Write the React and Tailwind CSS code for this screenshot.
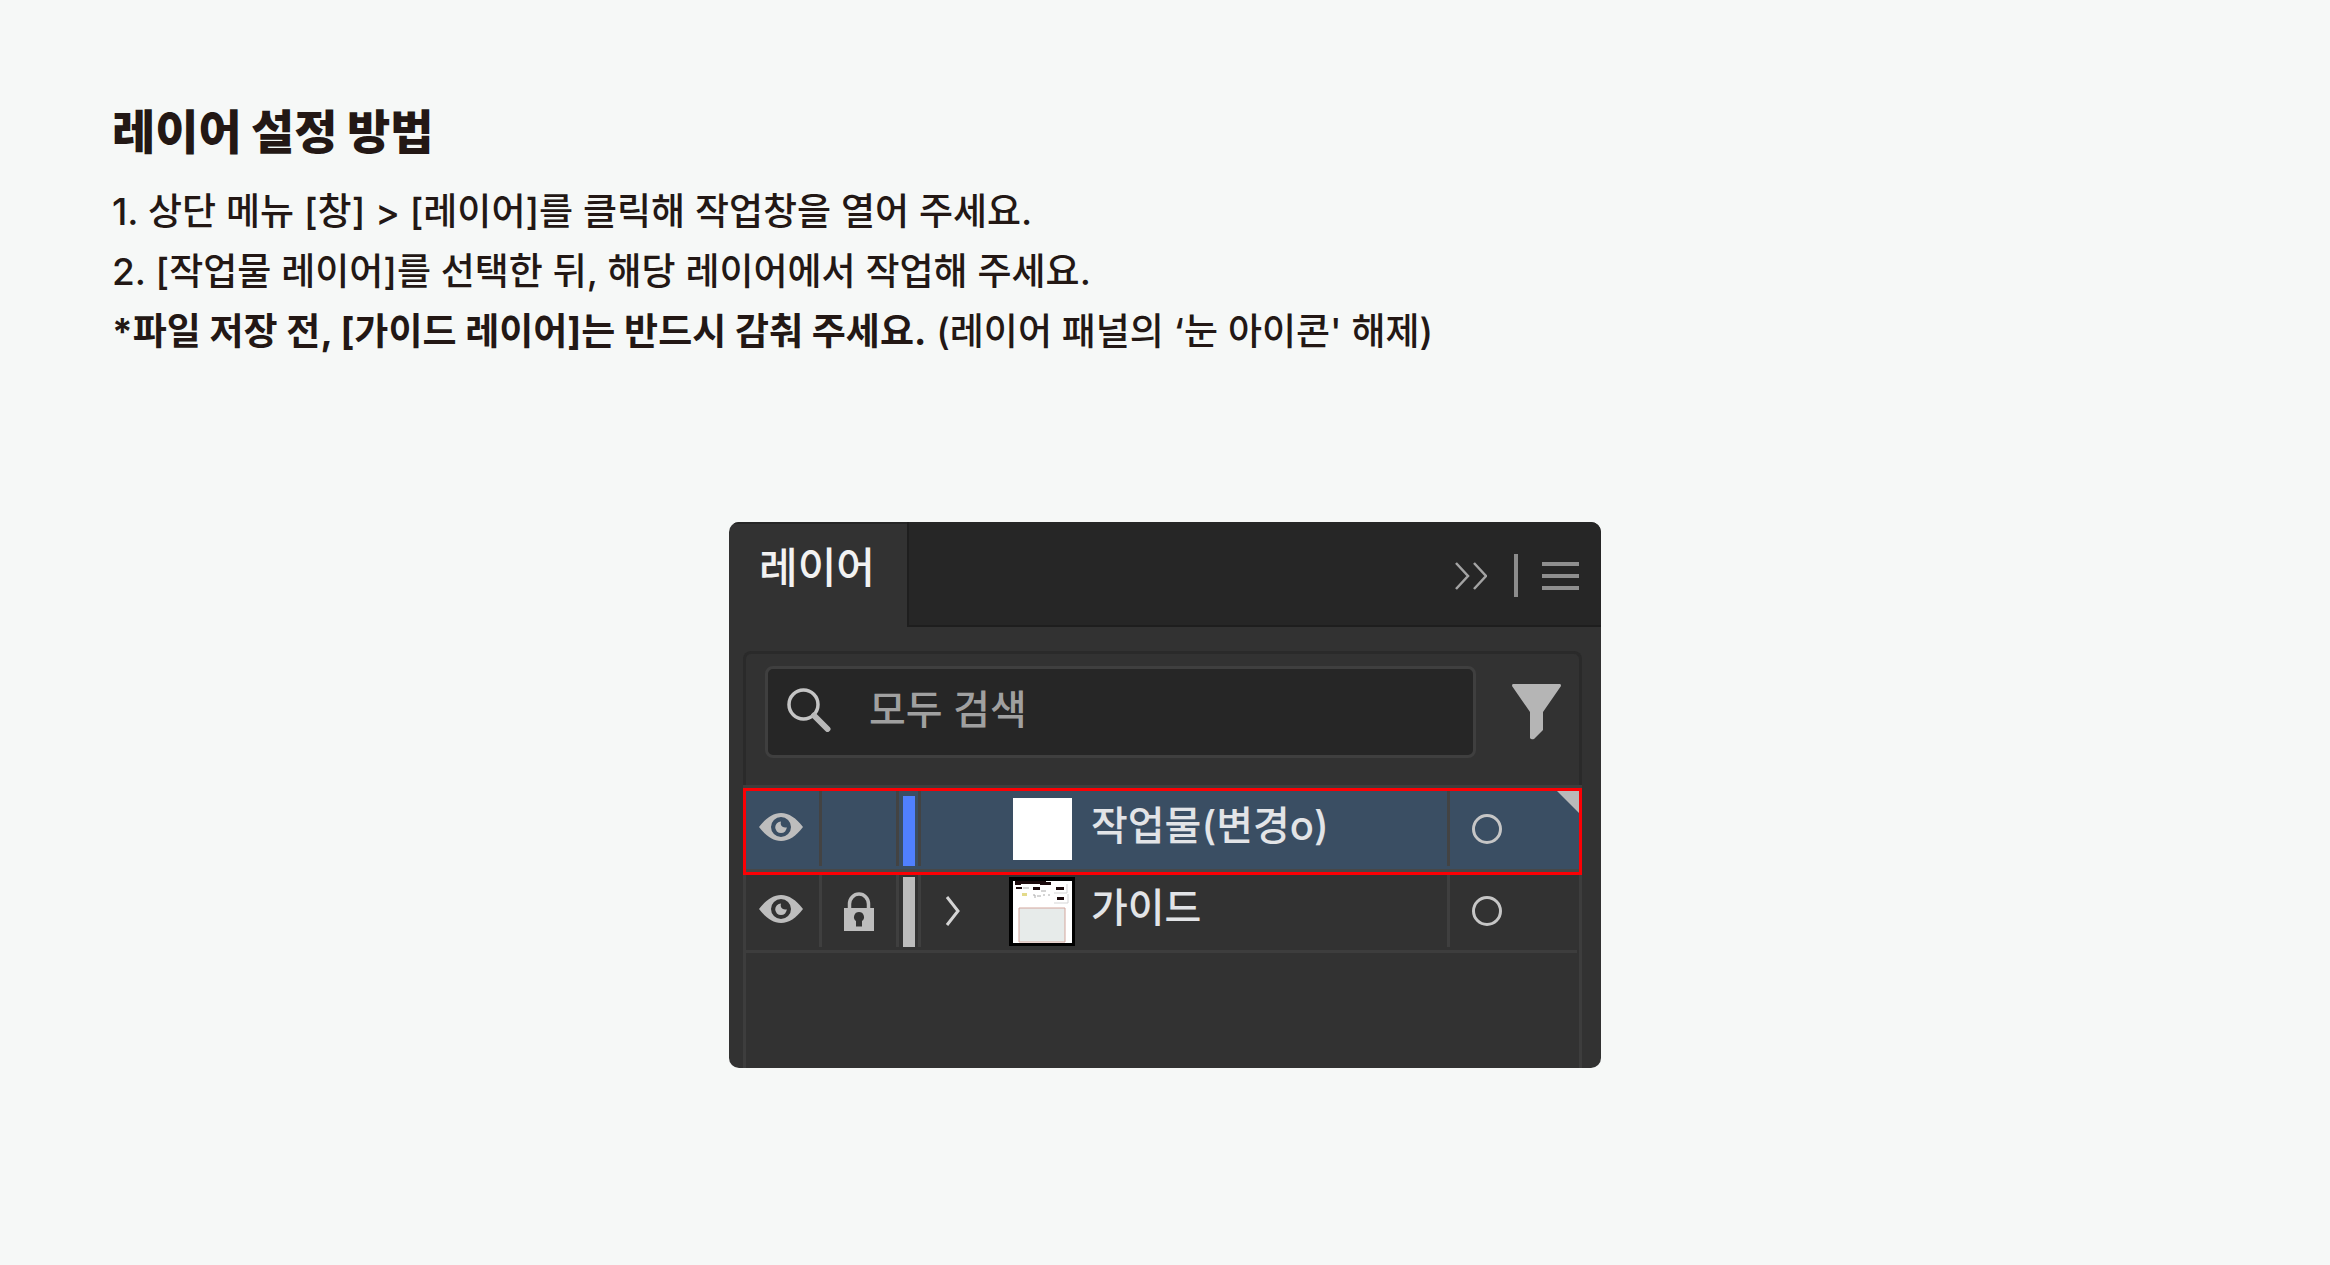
import React from "react";

function EyeIcon() {
  return (
    <svg width="44" height="28" viewBox="0 0 44 28" aria-hidden="true">
      <path
        fillRule="evenodd"
        fill="#bdbdbd"
        d="M0 14C7 5 14 0 22 0s15 5 22 14c-7 9-14 14-22 14S7 23 0 14Zm22-10a10 10 0 1 0 0 20 10 10 0 0 0 0-20Z"
      />
      <path fill="#bdbdbd" d="M22 8.500a5.800 5.800 0 1 0 5.800 5.800c-2.600.7-5-.4-5.800-2.300-.4-1.200-.4-2.400 0-3.500Z" />
    </svg>
  );
}

function LockIcon() {
  return (
    <svg width="30" height="39" viewBox="0 0 30 39" aria-hidden="true">
      <path d="M5.500 17V12a9.500 10 0 0 1 19 0v5" fill="none" stroke="#bdbdbd" strokeWidth="3.500" />
      <path
        fillRule="evenodd"
        fill="#bdbdbd"
        d="M0 16h30v23H0V16Zm15 4a5 5 0 0 0-3 9v5.500h6V29a5 5 0 0 0-3-9Z"
      />
    </svg>
  );
}

function ExpandIcon() {
  return (
    <svg width="16" height="30" viewBox="0 0 16 30" aria-hidden="true">
      <path d="M2 1l11 14L2 29" fill="none" stroke="#d4d4d4" strokeWidth="3" />
    </svg>
  );
}

function SearchIcon() {
  return (
    <svg width="44" height="44" viewBox="0 0 44 44" className="shrink-0" aria-hidden="true">
      <circle cx="16.500" cy="16.500" r="14.500" fill="none" stroke="#c4c4c4" strokeWidth="3.500" />
      <path d="M27 27.500l13.500 13.500" stroke="#b8b8b8" strokeWidth="6" strokeLinecap="round" />
    </svg>
  );
}

function FilterIcon() {
  return (
    <svg width="49" height="56" viewBox="0 0 49 56" aria-hidden="true">
      <path d="M1 0h47q1 0 1 2L31 28v18l-9 9q-3 1-4-1V28L0 2Q0 0 1 0Z" fill="#b5b5b5" />
    </svg>
  );
}

function CollapseIcon() {
  return (
    <svg width="32" height="28" viewBox="0 0 32 28" aria-hidden="true">
      <path d="M1 1l12 13L1 27M19 1l12 13L19 27" fill="none" stroke="#a3a3a3" strokeWidth="2.500" />
    </svg>
  );
}

function MenuIcon() {
  return (
    <svg width="37" height="28" viewBox="0 0 37 28" aria-hidden="true">
      <path d="M0 2h37M0 14h37M0 26h37" stroke="#8f8f8f" strokeWidth="4" />
    </svg>
  );
}

function GuideThumbnail() {
  return (
    <svg width="66" height="69" viewBox="0 0 66 69" aria-hidden="true">
      <path d="M0 0h66v69H0Z" fill="#000" />
      <path d="M4 4h59v62H4Z" fill="#fff" />
      <path d="M6 4h31v3H12v1H6ZM31 5h11v3H31ZM7 10h6v2H7ZM24 10h7v3h-7ZM47 10h8v3h-8ZM48 20h7v3h-7Z" fill="#1b0a0c" />
      <path d="M14 11h6M32 14h5M24 18h2v3M28 19h4M34 18h2M39 18h2" stroke="#aaa" fill="none" />
      <path d="M13 16h5v3h-5Z" fill="#e3da8a" />
      <path d="M45 16h13V7M45 26h14V17" stroke="#d5d5d5" fill="none" />
      <path d="M10 31h46v34H10Z" fill="#e7ebea" stroke="#d3a69d" />
    </svg>
  );
}

function LayerRow({ name, selected, locked, expandable, barClass, thumbnail }) {
  const divider = selected ? "border-[#434343]" : "border-[#3f3f3f]";
  return (
    <li className={selected ? "relative -mx-[3px] border-[3px] border-[#fb0004] bg-[#474747] pb-[3px]" : ""}>
      <div
        className={`grid grid-cols-[76px_77px_22px_88px_66px_1fr_129px] pb-[3px] ${
          selected ? "h-[78px] bg-[#3a4e63]" : "h-[75px]"
        }`}
      >
        <button
          aria-label={`${name} 표시`}
          className={`flex items-center justify-center border-r-[3px] pr-[3px] pb-1 ${divider}`}
        >
          <EyeIcon />
        </button>
        <button aria-label={`${name} 잠금`} className={`flex items-center justify-center border-r-[3px] ${divider}`}>
          {locked && <LockIcon />}
        </button>
        <div className={`flex items-end justify-center border-r-[3px] ${divider}`}>
          <span className={`h-[70px] w-3 ${barClass}`} />
        </div>
        <div className="flex items-center pl-6">
          {expandable && (
            <button aria-label={`${name} 펼치기`}>
              <ExpandIcon />
            </button>
          )}
        </div>
        <div className="flex items-center justify-center">{thumbnail}</div>
        <div className={`flex items-center border-r-[3px] pb-[6px] pl-4 ${divider}`}>
          <span className="text-[40px] leading-[48px] font-medium whitespace-nowrap text-[#e2e4e7]">{name}</span>
        </div>
        <div className="flex items-center pl-[22px]">
          <button aria-label={`${name} 대상`} className="size-[30px] rounded-full border-[3px] border-[#c6c6c6]" />
        </div>
      </div>
      {selected && (
        <svg width="22" height="22" viewBox="0 0 22 22" className="absolute top-0 right-0" aria-hidden="true">
          <path d="M0 0h22v22Z" fill="#b9b9b9" />
        </svg>
      )}
    </li>
  );
}

function LayerPanel() {
  return (
    <section
      aria-label="레이어"
      className="mx-auto flex w-full max-w-[872px] flex-col overflow-hidden rounded-[10px] bg-[#323232]"
    >
      <header className="flex h-[105px]">
        <h2 className="w-[178px] border-t-2 border-[#262626] pt-[14px] pl-[30px] text-[42px] leading-[60px] font-medium text-[#f2f2f2]">
          레이어
        </h2>
        <div className="flex flex-1 items-center justify-end border-b-2 border-l-2 border-[#1e1e1e] bg-[#262626] pt-1 pr-[22px]">
          <button aria-label="패널 접기" className="mr-[27px]">
            <CollapseIcon />
          </button>
          <span className="mr-6 h-[43px] w-1 bg-[#8c8c8c]" />
          <button aria-label="패널 메뉴">
            <MenuIcon />
          </button>
        </div>
      </header>

      <div className="mt-6 mr-[19px] ml-[14px] flex items-start rounded-t-lg border-x-[3px] border-t-[3px] border-[#2a2a2a] pt-3 pr-[18px] pb-[27px] pl-[19px]">
        <label className="flex h-[92px] min-w-0 flex-1 items-center rounded-lg border-[3px] border-[#3f3f3f] bg-[#262626] pb-1 pl-[19px]">
          <SearchIcon />
          <input
            type="text"
            aria-label="모두 검색"
            placeholder="모두 검색"
            className="ml-[38px] min-w-0 flex-1 bg-transparent text-[40px] leading-[60px] font-medium text-[#a0a0a0] outline-none placeholder:text-[#a0a0a0]"
          />
        </label>
        <button aria-label="필터" className="mt-[18px] ml-9">
          <FilterIcon />
        </button>
      </div>

      <div className="mr-[19px] ml-[14px] border-x-[3px] border-t-[3px] border-[#3d3d3d] pb-[115px]">
        <ul>
          <LayerRow
            name="작업물(변경o)"
            selected
            barClass="bg-[#5080ff]"
            thumbnail={<span className="h-[62px] w-[59px] bg-white" />}
          />
          <LayerRow name="가이드" locked expandable barClass="bg-[#bcbcbc]" thumbnail={<GuideThumbnail />} />
        </ul>
        <div className="mr-[2px] h-[3px] bg-[#3d3d3d]" />
      </div>
    </section>
  );
}

export default function App() {
  return (
    <main className="min-h-screen bg-[#f6f8f7] px-[112px] pt-[98px] pb-16 font-['Inter','Noto_Sans_CJK_KR',sans-serif] text-[#231815]">
      <h1 className="text-[47px] leading-[68px] font-black">레이어 설정 방법</h1>
      <div className="mt-4 mb-[160px] text-[37px] leading-[60px] font-medium">
        <p>1. 상단 메뉴 [창] &gt; [레이어]를 클릭해 작업창을 열어 주세요.</p>
        <p>2. [작업물 레이어]를 선택한 뒤, 해당 레이어에서 작업해 주세요.</p>
        <p>
          <strong className="font-bold">*파일 저장 전, [가이드 레이어]는 반드시 감춰 주세요.</strong> (레이어 패널의 ‘눈
          아이콘' 해제)
        </p>
      </div>
      <LayerPanel />
    </main>
  );
}
